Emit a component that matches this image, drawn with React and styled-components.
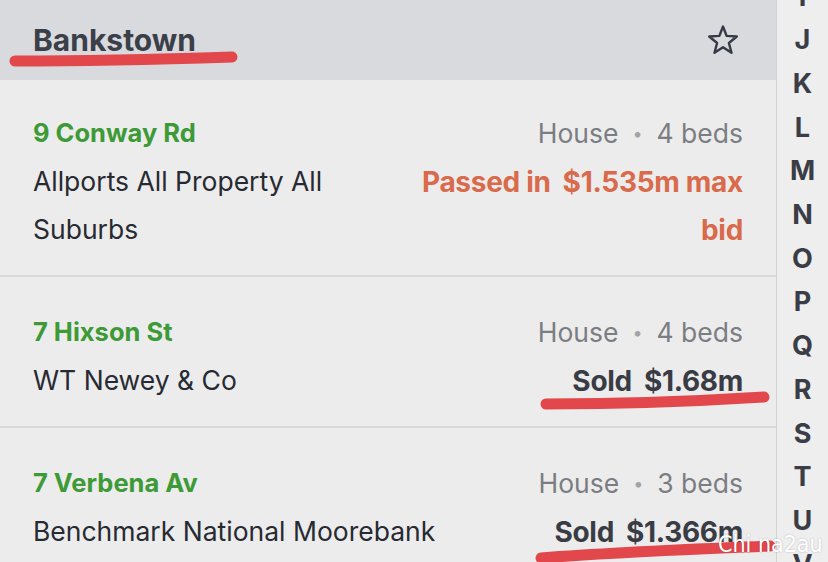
import React from 'react';
import styled, { createGlobalStyle } from 'styled-components';

const GlobalStyle = createGlobalStyle`
    html, body {
        margin: 0;
        padding: 0;
        background: #ececec;
    }
    body {
        font-family: Inter, "Noto Sans", sans-serif;
    }
`

const listings = [
    {
        address: '9 Conway Rd',
        agent: 'Allports All Property All Suburbs',
        type: 'House',
        beds: 4,
        status: 'passed',
        label: 'Passed in',
        price: '$1.535m max bid'
    },
    {
        address: '7 Hixson St',
        agent: 'WT Newey & Co',
        type: 'House',
        beds: 4,
        status: 'sold',
        label: 'Sold',
        price: '$1.68m'
    },
    {
        address: '7 Verbena Av',
        agent: 'Benchmark National Moorebank',
        type: 'House',
        beds: 3,
        status: 'sold',
        label: 'Sold',
        price: '$1.366m'
    }
];

const letters = ['I', 'J', 'K', 'L', 'M', 'N', 'O', 'P', 'Q', 'R', 'S', 'T', 'U', 'V'];

const StarIcon = () => (
    <svg width="32" height="32" viewBox="0 0 32 32" fill="none">
        <path
            d="M16 2.5 L19.6 11.9 L29.8 12.5 L21.9 19 L24.5 28.8 L16 23.3 L7.5 28.8 L10.1 19 L2.2 12.5 L12.4 11.9 Z"
            stroke="#363a44"
            strokeWidth="2.4"
            strokeLinejoin="round"
        />
    </svg>
)

const Listing = (props) => {
    const item = props.item;
    return (
        <Row>
            <LeftCol>
                <Address>{item.address}</Address>
                <Agent>{item.agent}</Agent>
            </LeftCol>
            <RightCol>
                <Meta>{item.type}<Dot>•</Dot>{item.beds} beds</Meta>
                <Result status={item.status}>
                    <ResultLabel>{item.label}</ResultLabel>{item.price}
                </Result>
            </RightCol>
        </Row>
    )
}

const App = () => {
    return (
        <Page>
            <GlobalStyle />
            <Main>
                <Header>
                    <Suburb>Bankstown</Suburb>
                    <StarButton><StarIcon /></StarButton>
                </Header>
                <List>
                    {listings.map((item, index) => <Listing key={index} item={item} />)}
                </List>
            </Main>
            <IndexBar>
                {letters.map(letter => <IndexLetter key={letter}>{letter}</IndexLetter>)}
            </IndexBar>
            <Marks width="828" height="562" viewBox="0 0 828 562">
                <path d="M15 61 C 80 61, 170 59, 232 57" />
                <path d="M546 404 C 620 404, 700 401, 764 397" />
                <path d="M541 558 C 620 552, 700 549, 770 546" />
            </Marks>
            <Watermark>Chi na2au</Watermark>
        </Page>
    )
}

const Page = styled.div`
    position: relative;
    display: flex;
    width: 828px;
    height: 562px;
    overflow: hidden;
    background: #ececec;
`

const Main = styled.div`
    flex: 1;
    display: flex;
    flex-direction: column;
    background: #ececec;
`

const Header = styled.div`
    height: 80px;
    flex-shrink: 0;
    display: flex;
    align-items: center;
    justify-content: space-between;
    padding: 0 37px 0 33px;
    background: #d9dadd;
`

const Suburb = styled.h1`
    margin: 0;
    font-size: 30px;
    font-weight: 700;
    color: #3b3f49;
`

const StarButton = styled.div`
    display: flex;
    align-items: center;
    justify-content: center;
`

const List = styled.div`
    display: flex;
    flex-direction: column;
`

const Row = styled.div`
    display: flex;
    gap: 20px;
    padding: 29px 33px 21px;
    border-bottom: 2px solid #d9d9d9;

    & + & {
        padding-top: 31px;
    }
`

const LeftCol = styled.div`
    flex: 1 1 0;
    min-width: 0;
`

const RightCol = styled.div`
    flex: 0 1 auto;
    max-width: 330px;
    text-align: right;
`

const Address = styled.div`
    font-size: 25.5px;
    line-height: 48px;
    font-weight: 700;
    color: #3d9a36;
`

const Agent = styled.div`
    font-size: 26.5px;
    line-height: 48px;
    color: #272a32;
`

const Meta = styled.div`
    font-size: 26.5px;
    line-height: 48px;
    color: #7b7d82;
`

const Dot = styled.span`
    display: inline-block;
    margin: 0 14px;
    font-size: 18px;
    vertical-align: 3px;
    color: #a2a4a8;
`

const Result = styled.div`
    font-size: 28px;
    line-height: 48px;
    font-weight: 700;
    letter-spacing: -0.3px;
    color: ${props => props.status === 'passed' ? '#d96a4b' : '#393c44'};
`

const ResultLabel = styled.span`
    margin-right: 12px;
`

const IndexBar = styled.div`
    width: 51px;
    flex-shrink: 0;
    display: flex;
    flex-direction: column;
    align-items: center;
    background: #eeeeee;
    border-left: 1px solid #d3d3d3;
`

const IndexLetter = styled.div`
    font-size: 27px;
    line-height: 43.7px;
    font-weight: 700;
    color: #3a3d45;

    &:first-child {
        margin-top: -25.5px;
    }
`

const Marks = styled.svg`
    position: absolute;
    left: 0;
    top: 0;
    pointer-events: none;
    fill: none;
    stroke: #e2474c;
    stroke-width: 11;
    stroke-linecap: round;
`

const Watermark = styled.div`
    position: absolute;
    left: 718px;
    top: 531px;
    font-family: "DejaVu Sans Condensed", "DejaVu Sans", sans-serif;
    font-size: 23px;
    color: #ffffff;
    text-shadow: 0 0 2px rgba(0, 0, 0, 0.25);
    pointer-events: none;
`

export default App;
